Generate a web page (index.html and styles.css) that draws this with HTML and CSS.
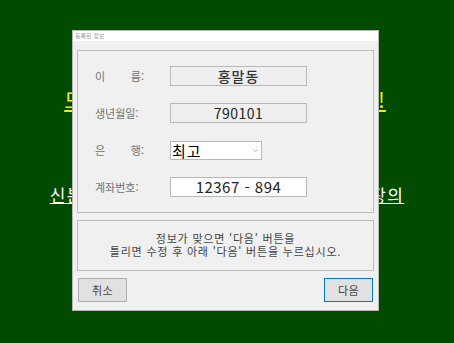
FILE: index.html
```html
<!DOCTYPE html>
<html lang="ko">
<head>
<meta charset="utf-8">
<link rel="stylesheet" href="styles.css">
</head>
<body>
<div class="stage">
  <p class="headline">모든 정보를 다시 한번 확인하세요!</p>
  <p class="subline">신분증에 나와있는 본인의 정보와 은행 통장의</p>

  <div class="dialog">
    <div class="titlebar">등록된 정보</div>
    <div class="body">
      <div class="group fields">
        <div class="label spread"><span>이</span><span>름:</span></div>
        <div class="field readonly bold">홍말동</div>

        <div class="label">생년월일:</div>
        <div class="field readonly">790101</div>

        <div class="label spread"><span>은</span><span>행:</span></div>
        <div class="combo"><span class="combo-text">최고</span>
          <svg class="chev" width="5" height="3" viewBox="0 0 5 3"><path d="M0.5 0.5 L2.5 2.5 L4.5 0.5" fill="none" stroke="#9a9a9a" stroke-width="0.8"/></svg>
        </div>

        <div class="label">계좌번호:</div>
        <div class="field input">12367 - 894</div>
      </div>

      <div class="group message">
        <p>정보가 맞으면 '다음' 버튼을</p>
        <p>틀리면 수정 후 아래 '다음' 버튼을 누르십시오.</p>
      </div>

      <div class="buttons">
        <button class="btn">취소</button>
        <button class="btn primary">다음</button>
      </div>
    </div>
  </div>
</div>
</body>
</html>
```
FILE: styles.css
```css
html, body {
  margin: 0;
  padding: 0;
}
body {
  background: #004b00;
  width: 454px;
  height: 343px;
  overflow: hidden;
  font-family: "Noto Sans CJK KR", "Noto Sans", sans-serif;
}
.stage {
  position: relative;
  width: 454px;
  height: 343px;
}
.headline {
  margin: 0;
  padding: 85px 4px 0 0;
  text-align: center;
  white-space: nowrap;
  font-size: 21px;
  line-height: 28px;
  letter-spacing: 1.1px;
  color: #f0f000;
  text-decoration: underline;
}
.subline {
  margin: 0;
  padding-top: 71px;
  text-align: center;
  white-space: nowrap;
  font-size: 17px;
  line-height: 22px;
  letter-spacing: 1.4px;
  color: #ffffff;
  text-decoration: underline;
}
.dialog {
  position: absolute;
  left: 72px;
  top: 30px;
  width: 305px;
  height: 279px;
  border: 1px solid #b8b8b8;
  background: #f0f0f0;
  display: flex;
  flex-direction: column;
}
.titlebar {
  height: 10px;
  background: #ffffff;
  font-size: 6px;
  line-height: 10px;
  color: #999;
  padding-left: 2px;
}
.body {
  padding: 9px 4px 0 4px;
  display: flex;
  flex-direction: column;
}
.group {
  border: 1px solid #bcbcbc;
}
.fields {
  display: grid;
  grid-template-columns: 75px 137px;
  grid-auto-rows: 20px;
  row-gap: 17px;
  padding: 15px 0 0 17px;
  box-sizing: border-box;
  height: 163px;
  align-items: center;
}
.label {
  width: 49px;
  font-size: 11px;
  color: #707070;
  white-space: nowrap;
  line-height: 20px;
}
.spread {
  display: flex;
  justify-content: space-between;
}
.field {
  height: 20px;
  box-sizing: border-box;
  border: 1px solid #b8b8b8;
  text-align: center;
  font-size: 14px;
  line-height: 18px;
  color: #222;
  letter-spacing: 0.5px;
}
.readonly {
  background: #efefef;
}
.bold {
  font-weight: 500;
  color: #333;
  letter-spacing: 1px;
}
.input {
  background: #ffffff;
  font-size: 15px;
}
.combo {
  width: 92px;
  height: 19px;
  box-sizing: border-box;
  border: 1px solid #b8b8b8;
  background: #fff;
  display: flex;
  align-items: center;
  justify-content: space-between;
  padding: 0 3px 0 1px;
}
.combo-text {
  font-size: 15px;
  font-weight: 400;
  color: #000;
  line-height: 17px;
  letter-spacing: 1px;
}
.chev {
  display: block;
}
.message {
  margin-top: 7px;
  height: 51px;
  box-sizing: border-box;
  display: flex;
  flex-direction: column;
  justify-content: center;
  padding-bottom: 2px;
}
.message p {
  margin: 0;
  text-align: center;
  font-size: 11px;
  line-height: 13px;
  letter-spacing: 0.8px;
  color: #444;
  white-space: nowrap;
}
.buttons {
  margin-top: 7px;
  display: flex;
  justify-content: space-between;
  padding: 0 1px;
}
.btn {
  width: 49px;
  height: 24px;
  box-sizing: border-box;
  border: 1px solid #adadad;
  background: #e1e1e1;
  font-family: "Noto Sans CJK KR", sans-serif;
  font-size: 11px;
  color: #444;
  padding: 0;
  letter-spacing: 0.5px;
}
.primary {
  border: 1px solid #0078d7;
}
```
